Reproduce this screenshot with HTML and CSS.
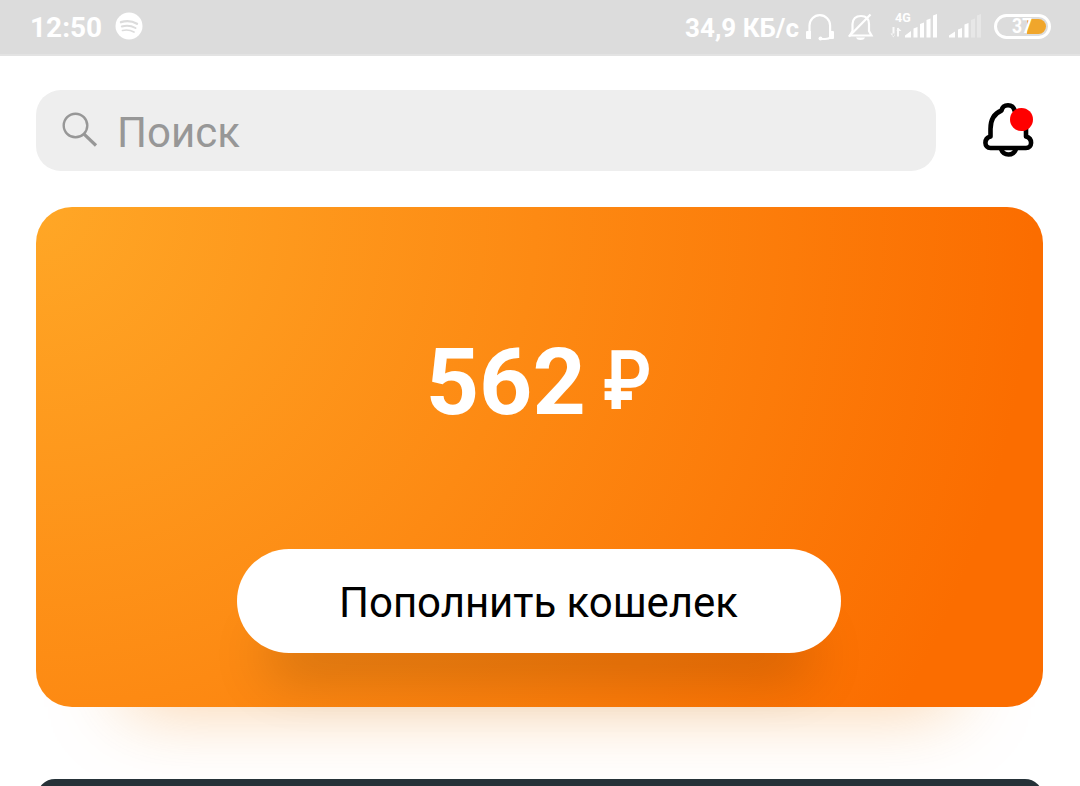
FILE: index.html
```html
<!DOCTYPE html>
<html lang="ru">
<head>
<meta charset="utf-8">
<title>Кошелек</title>
<link rel="stylesheet" href="styles.css">
</head>
<body>
<div class="screen">
  <header class="status">
    <span class="clock">12:50</span>
    <svg class="spotify" viewBox="0 0 28 28"><circle cx="14" cy="14" r="13.5" fill="#fff"/><g fill="none" stroke="#dcdcdc" stroke-linecap="round"><path d="M6 10.2Q14.500 7.500 22 11.700" stroke-width="2.400"/><path d="M6.800 14.500Q14 12.400 20.500 16" stroke-width="2"/><path d="M7.500 18.500Q13.500 17 19 20" stroke-width="1.700"/></g></svg>
    <span class="speed">34,9 КБ/с</span>
    <svg class="headset" viewBox="0 0 30 28"><path d="M4.500 19V12.500a10.300 10.300 0 0 1 20.600 0V19" fill="none" stroke="#fff" stroke-width="2.200"/><path d="M1 19q0-1 1-1h4v8H2q-1 0-1-1zM24 18h4q1 0 1 1v6q0 1-1 1h-4z" fill="#fff"/><path d="M26 24q-2 2-6 2h-5" fill="none" stroke="#fff" stroke-width="2"/><circle cx="15.500" cy="25.500" r="2" fill="#fff"/></svg>
    <svg class="mute" viewBox="0 0 28 28"><g fill="none" stroke="#fff" stroke-width="2.200"><path d="M3 22.500h21.500L22 18V11q0-8-8-8t-8.500 8v7z"/><path d="M2 23.500 23.500 1.500"/></g><path d="M9 24.500h9q-1 2.500-4.500 2.500T9 24.500" fill="#fff"/></svg>
    <svg class="signals" viewBox="0 0 92 32">
      <g fill="#fff"><text class="net" x="4" y="11.500">4G</text>
      <path d="M1.500 17H3.500v9H1.500zM6 18H8v8.500H6zM-.5 23.500l3 4 1-4zM5.500 21l1.500-3.500 3.500 3.500z" opacity=".85"/>
      <path d="M14 27.500v-2l6-4.500v6.500zM22.500 27.500v-9l4-1.500v10.500zM29 27.500V14l4-1.500v15zM35.500 27.500V10l4-1.500v19zM42 27.500V5.500l4-1.500v23.500z"/>
      <path d="M58 27.500v-2l6-4v6zM67 27.500v-8l4-1.500v9.500zM73.500 27.500v-13l4-1.500v14.500z"/></g>
      <path d="M80 27.500V10l4-1.500v19zM86 27.500V5.500l4-1.500v23.500z" fill="#e7e7e7"/>
    </svg>
    <div class="battery"><span class="charge"></span><span class="percent">37</span></div>
  </header>
  <main class="content">
    <div class="top">
      <div class="search">
        <svg class="lens" viewBox="0 0 36 36"><g fill="none" stroke="#979797"><circle cx="13.500" cy="13.500" r="11.800" stroke-width="2.400"/><path d="M21.800 21.800 34 33.500" stroke-width="3.200"/></g></svg>
        <span class="placeholder">Поиск</span>
      </div>
      <svg class="bell" viewBox="0 0 54 58"><g fill="none" stroke="#000" stroke-width="4.600"><path d="M20.500 9.500C22 2.500 32 2.500 33.500 9.500Q45 14 45 28V35.500C52 37.500 51.500 47 45 47H9.500C3 47 2.500 37.500 9.500 35.500V28Q9.500 14 20.500 9.500Z" stroke-linejoin="round"/><path d="M20 48Q22 53.500 27.500 53.500T35 48"/></g><circle cx="40.500" cy="18.500" r="11.500" fill="#f00"/></svg>
    </div>
    <section class="card">
      <div class="balance"><span class="amount">562</span><span class="currency">₽</span></div>
      <button class="refill">Пополнить кошелек</button>
    </section>
    <section class="next"></section>
  </main>
</div>
</body>
</html>
```
FILE: styles.css
```css
* { box-sizing: border-box; }
body { margin: 0; background: #fff; font-family: Roboto, "Noto Sans", sans-serif; }
.screen { width: 1080px; height: 786px; overflow: hidden; }
.status { display: flex; align-items: center; height: 56px; padding: 0 29px 2px 30px; background: #dcdcdc; border-bottom: 2px solid #e3e3e3; color: #fff; font-weight: 700; }
.clock { width: 85px; padding-top: 4px; font-size: 28px; line-height: 50px; }
.spotify { width: 28px; height: 28px; }
.speed { margin-left: auto; padding-top: 3px; font-size: 26px; line-height: 50px; white-space: nowrap; }
.headset { width: 30px; height: 28px; margin: 1px 0 0 6px; }
.mute { width: 28px; height: 28px; margin: 1px 0 0 12px; }
.signals { width: 92px; height: 32px; margin: 0 11px 0 16px; overflow: visible; }
.net { font-size: 12.5px; font-weight: 700; }
.battery { position: relative; width: 57px; height: 25px; border: 3px solid #fff; border-radius: 13px; }
.charge { position: absolute; top: 2px; right: 2px; width: 19px; height: 15px; border-radius: 0 8px 8px 0; background: #f0a62c; }
.percent { position: absolute; left: 15px; top: -1px; font-size: 20px; font-weight: 700; line-height: 21px; transform: scaleX(.88); transform-origin: left; }
.content { padding: 34px 37px 0 36px; }
.top { display: flex; align-items: center; height: 81px; }
.search { display: flex; align-items: center; width: 900px; height: 81px; padding-left: 26px; border-radius: 25px; background: #eee; }
.lens { width: 36px; height: 36px; margin-bottom: 1px; }
.placeholder { margin-left: 19px; padding-top: 5px; font-size: 42px; line-height: 80px; color: #979797; }
.bell { width: 54px; height: 58px; margin-left: 45px; margin-top: -1px; }
.card { display: flex; flex-direction: column; align-items: center; height: 500px; margin-top: 36px; padding: 121px 2px 0 0; border-radius: 36px; background: radial-gradient(circle 1000px at 0 0, #ffa726, #fb6d00); box-shadow: 0 90px 72px -90px rgba(240, 125, 0, .36); }
.balance { display: flex; align-items: baseline; height: 110px; padding-left: 8px; color: #fff; font-weight: 700; line-height: 110px; }
.amount { font-size: 93px; }
.currency { margin: 0 0 0 17px; font-size: 81px; font-weight: 600; transform: translateY(-5px) scaleX(.86); transform-origin: left; }
.refill { width: 604px; height: 104px; margin-top: 111px; padding: 3px 0 0; border: 0; border-radius: 52px; background: #fff; box-shadow: 0 54px 54px -27px rgba(0, 0, 0, .17); font: 400 42px/1 Roboto, "Noto Sans", sans-serif; letter-spacing: -.05px; color: #000; }
.next { height: 40px; margin: 72px 0 0 1px; border-radius: 18px; background: #263238; }
```
